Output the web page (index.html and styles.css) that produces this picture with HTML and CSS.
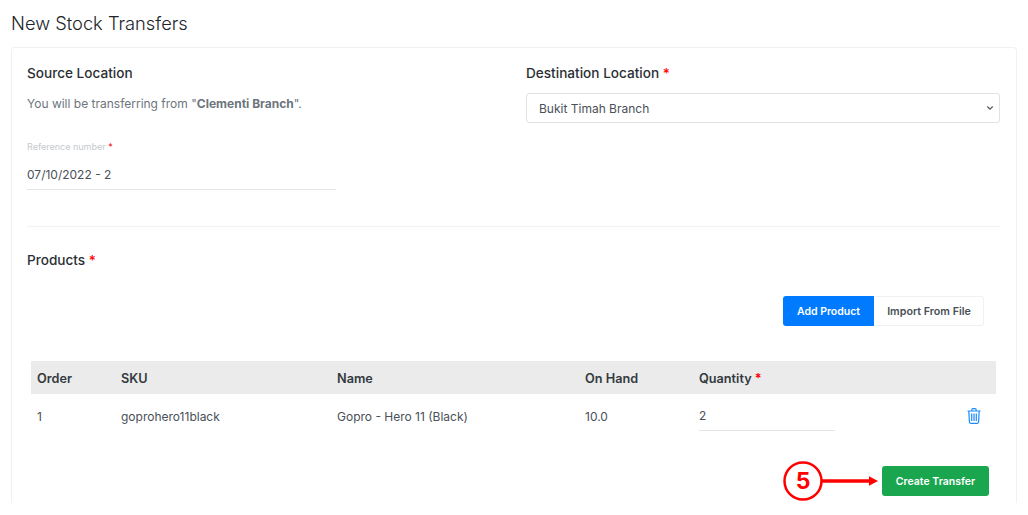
FILE: index.html
```html
<!DOCTYPE html>
<html lang="en">
<head>
<meta charset="utf-8">
<title>New Stock Transfers</title>
<link rel="stylesheet" href="styles.css">
</head>
<body>
<main class="page">
  <h1 class="page-title">New Stock Transfers</h1>
  <section class="card">
    <div class="top-row">
      <div class="col-source">
        <h2 class="section-label">Source Location</h2>
        <p class="source-text">You will be transferring from "<strong>Clementi Branch</strong>".</p>
        <div class="ref-field">
          <label class="ref-label">Reference number <span class="req">*</span></label>
          <div class="ref-value">07/10/2022 - 2</div>
        </div>
      </div>
      <div class="col-dest">
        <h2 class="section-label">Destination Location <span class="req">*</span></h2>
        <div class="select-box">
          <span>Bukit Timah Branch</span>
          <svg class="chevron" width="8" height="6" viewBox="0 0 8 6"><path d="M1.300 1.500 4 4.200 6.700 1.500" fill="none" stroke="#50565c" stroke-width="1.200"/></svg>
        </div>
      </div>
    </div>
    <hr class="divider">
    <h2 class="section-label products-label">Products <span class="req">*</span></h2>
    <div class="btn-row">
      <button class="btn btn-blue">Add Product</button>
      <button class="btn btn-white">Import From File</button>
    </div>
    <table class="products">
      <colgroup>
        <col class="c-order"><col class="c-sku"><col class="c-name"><col class="c-hand"><col class="c-qty"><col>
      </colgroup>
      <thead>
        <tr><th>Order</th><th>SKU</th><th>Name</th><th>On Hand</th><th>Quantity <span class="req">*</span></th><th></th></tr>
      </thead>
      <tbody>
        <tr>
          <td>1</td><td>goprohero11black</td><td>Gopro - Hero 11 (Black)</td><td>10.0</td>
          <td class="qty-cell"><div class="qty-value">2</div></td>
          <td class="trash-cell">
            <svg class="trash" width="14" height="16" viewBox="0 0 14 16" fill="none" stroke="#1a8cff" stroke-width="1.2">
              <path d="M.5 3h13M4.800 3V1.900C4.800 1.100 5.300.6 6 .6h2c.7 0 1.200.5 1.200 1.300V3"/>
              <path d="M1.800 3l.6 10.800c0 .8.6 1.500 1.400 1.500h6.400c.8 0 1.400-.7 1.400-1.500L12.200 3"/>
              <path d="M4.700 5.500v7.500M7 5.500v7.500M9.300 5.500v7.500"/>
            </svg>
          </td>
        </tr>
      </tbody>
    </table>
    <div class="submit-row">
      <button class="btn btn-green">Create Transfer</button>
      <svg class="callout" width="100" height="40" viewBox="0 0 100 40">
        <circle cx="20" cy="20" r="18.500" fill="#fff" stroke="#f00" stroke-width="2.500"/>
        <text class="callout-num" x="20" y="28" text-anchor="middle">5</text>
        <path d="M39 20H87" stroke="#f00" stroke-width="3.400"/>
        <path d="M86 15.200 95 20 86 24.800z" fill="#f00"/>
      </svg>
    </div>
  </section>
</main>
</body>
</html>
```
FILE: styles.css
```css
* { box-sizing: border-box; }
html, body { margin: 0; height: 515px; overflow: hidden; background: #fff; }
body { font-family: Inter, "Liberation Sans", sans-serif; color: #343a40; }
.page { padding: 12px 11px 0; }
.page-title { margin: 0 0 13px 0; font-size: 18.300px; line-height: 22px; font-weight: 300; color: #212529; }
.card {
  position: relative;
  height: 456px;
  border: 1px solid #f1f1f3;
  border-bottom: none;
  border-radius: 4px 4px 0 0;
  padding: 15px 16px 0 15px;
}
.top-row { display: flex; height: 163px; }
.col-source { width: 499px; flex: none; }
.col-dest { flex: 1; }
.section-label { margin: 0; font-size: 13.600px; line-height: 20px; font-weight: 500; color: #2b2f33; }
.req { color: #f00; }
.source-text { margin: 11px 0 0; font-size: 12px; line-height: 20px; color: #6c757d; }
.source-text strong { font-weight: 700; }
.ref-field { width: 309px; margin-top: 27px; border-bottom: 1px solid #e1e4e8; height: 49px; }
.ref-label { display: block; font-size: 9px; line-height: 12px; color: #c5c9ce; }
.ref-value { margin-top: 13px; font-size: 12px; line-height: 18px; color: #495057; }
.select-box {
  display: flex; align-items: center; justify-content: space-between;
  height: 30px; margin-top: 10px; padding: 0 5px 0 12px;
  border: 1px solid #dfe3e7; border-radius: 3px;
  font-size: 12px; color: #495057;
}
.divider { margin: 0; border: 0; border-top: 1px solid #f3f3f4; }
.products-label { margin-top: 23px; }
.btn { font-family: inherit; font-size: 10.500px; font-weight: 600; border-radius: 3px; cursor: pointer; padding: 0; }
.btn-row { display: flex; justify-content: flex-end; gap: 1px; margin: 26px 16px 0 0; }
.btn-blue { width: 91px; height: 30px; background: #007bff; color: #fff; border: 0; border-radius: 3px 0 0 3px; }
.btn-white { width: 109px; height: 30px; background: #fff; color: #495057; border: 1px solid #f1f1f3; border-left: 0; border-radius: 0 3px 3px 0; font-size: 10.700px; }
.products { width: 965px; margin: 35px 0 0 4px; border-collapse: collapse; table-layout: fixed; font-size: 12px; }
.c-order { width: 84px; } .c-sku { width: 216px; } .c-name { width: 248px; } .c-hand { width: 114px; } .c-qty { width: 142px; }
.products th { height: 33px; padding: 1px 0 0 6px; text-align: left; background: #ebebeb; font-size: 12.700px; font-weight: 600; color: #343a40; }
.products td { height: 44px; padding: 0 0 0 6px; color: #495057; vertical-align: middle; }
.products td.qty-cell { vertical-align: top; }
.qty-value { height: 37px; padding-top: 13px; line-height: 18px; border-bottom: 1px solid #e1e4e8; }
.trash-cell { text-align: right; }
.trash { display: block; margin: 0 15px 0 auto; }
.submit-row { display: flex; justify-content: flex-end; margin: 28px 11px 0 0; }
.btn-green { width: 107px; height: 30px; background: #1aa64f; color: #fff; border: 0; }
.callout { position: absolute; left: 771px; bottom: 2px; }
.callout-num { font-family: Inter, "Liberation Sans", sans-serif; font-size: 23px; font-weight: 700; fill: #f00; }
```
